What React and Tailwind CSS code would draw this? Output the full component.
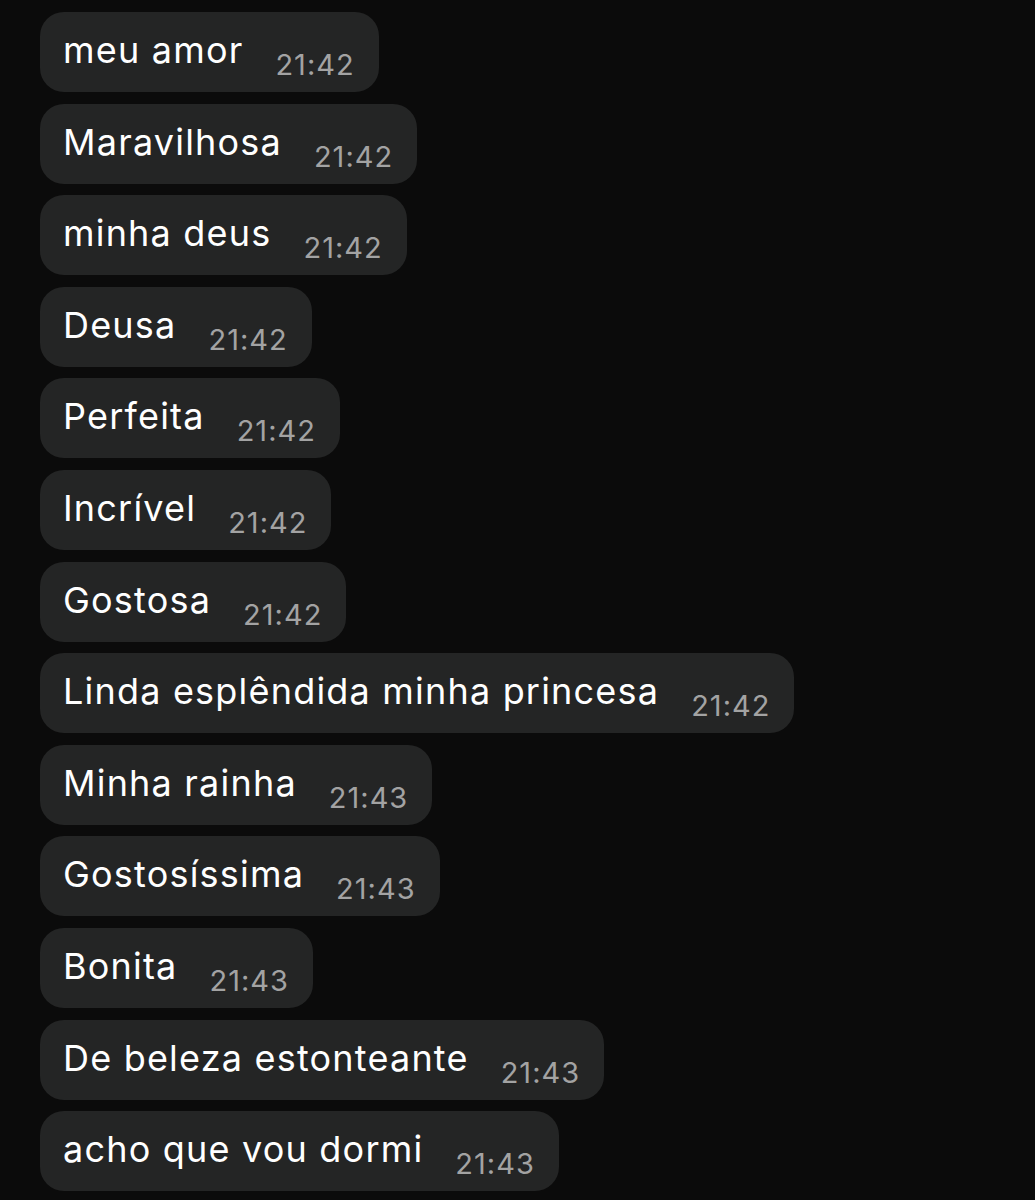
import React from 'react';

const MESSAGES = [
  { text: 'meu amor', time: '21:42' },
  { text: 'Maravilhosa', time: '21:42' },
  { text: 'minha deus', time: '21:42' },
  { text: 'Deusa', time: '21:42' },
  { text: 'Perfeita', time: '21:42' },
  { text: 'Incrível', time: '21:42' },
  { text: 'Gostosa', time: '21:42' },
  { text: 'Linda esplêndida minha princesa', time: '21:42' },
  { text: 'Minha rainha', time: '21:43' },
  { text: 'Gostosíssima', time: '21:43' },
  { text: 'Bonita', time: '21:43' },
  { text: 'De beleza estonteante', time: '21:43' },
  { text: 'acho que vou dormi', time: '21:43' },
];

function Bubble({ text, time }) {
  return (
    <div className="self-start flex items-start h-[80px] rounded-[24px] bg-[#242525] pl-[23px] pr-[24px]">
      <span className="text-[36px] leading-[40px] pt-[18px] tracking-[1.2px] text-white">{text}</span>
      <span className="ml-[32px] text-[29px] leading-[32px] pt-[37px] tracking-[1px] text-[#a3a3a3]">{time}</span>
    </div>
  );
}

export default function App() {
  return (
    <div className="min-h-[1200px] bg-[#0b0b0b] pt-[12px] pl-[40px] overflow-hidden" style={{ fontFamily: 'Inter, "Liberation Sans", sans-serif' }}>
      <div className="flex flex-col gap-[11.6px]">
        {MESSAGES.map((m, i) => (
          <Bubble key={i} text={m.text} time={m.time} />
        ))}
      </div>
    </div>
  );
}
